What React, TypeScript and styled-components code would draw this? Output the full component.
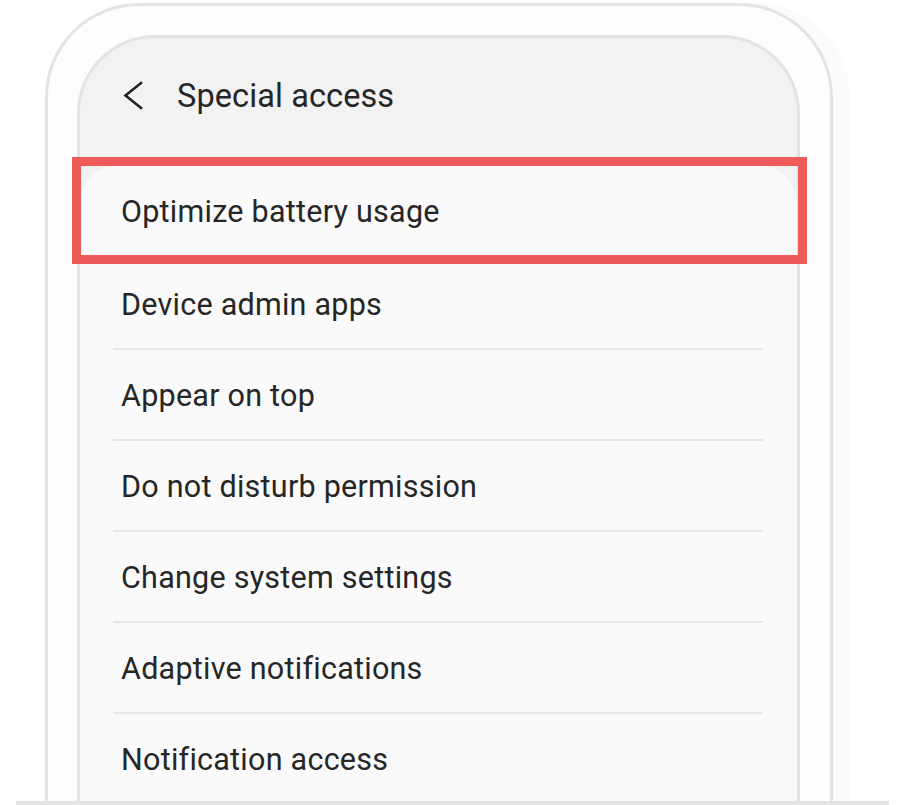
import React from 'react';
import styled, { createGlobalStyle } from 'styled-components';

const GlobalStyle = createGlobalStyle`
    html, body {
        margin: 0;
        padding: 0;
        background: #ffffff;
        overflow: hidden;
    }
    * {
        box-sizing: border-box;
    }
`;

const items = [
    'Optimize battery usage',
    'Device admin apps',
    'Appear on top',
    'Do not disturb permission',
    'Change system settings',
    'Adaptive notifications',
    'Notification access',
];

const App = () => {
    return (
        <Page>
            <GlobalStyle />
            <PhoneFrame>
                <Screen>
                    <Header>
                        <BackButton>
                            <svg width="20" height="30" viewBox="0 0 20 30" fill="none" xmlns="http://www.w3.org/2000/svg">
                                <path d="M18 2L2.5 14.5L18 27" stroke="#222222" strokeWidth="2.6" strokeLinecap="square" strokeLinejoin="miter" />
                            </svg>
                        </BackButton>
                        <Title>Special access</Title>
                    </Header>
                    <Card>
                        {items.map((label, i) => (
                            <Row key={label} first={i === 0}>
                                {label}
                            </Row>
                        ))}
                    </Card>
                </Screen>
            </PhoneFrame>
            <Highlight />
            <BaseLine />
        </Page>
    );
};

const Page = styled.div`
    position: relative;
    width: 906px;
    height: 805px;
    overflow: hidden;
    padding: 3px 0 0 45px;
    font-family: Roboto, "Noto Sans", sans-serif;
`;

const PhoneFrame = styled.div`
    width: 788px;
    height: 830px;
    border: 3px solid #e3e3e3;
    border-bottom: none;
    border-radius: 94px 94px 0 0;
    background: #fdfdfd;
    padding: 29px 30px 0 29px;
    box-shadow: 17px 0 0 0 #fbfbfb;
`;

const Screen = styled.div`
    height: 100%;
    border: 3px solid #e3e3e3;
    border-bottom: none;
    border-radius: 78px 78px 0 0;
    background: #f2f2f2;
    display: flex;
    flex-direction: column;
    overflow: hidden;
`;

const Header = styled.div`
    height: 128px;
    flex-shrink: 0;
    display: flex;
    align-items: center;
    padding: 0 0 12px 43px;
`;

const BackButton = styled.div`
    width: 20px;
    height: 30px;
    display: flex;
    align-items: center;
`;

const Title = styled.div`
    margin-left: 34px;
    font-size: 32.5px;
    color: #262626;
    letter-spacing: 0.1px;
`;

const Card = styled.div`
    flex: 1;
    background: #fafafa;
    border-radius: 37px 37px 0 0;
    padding: 0 34px 0 33px;
`;

const Row = styled.div<{ first?: boolean }>`
    height: 91px;
    display: flex;
    align-items: center;
    padding: ${props => props.first ? '0' : '1px'} 0 0 8px;
    border-top: ${props => props.first ? 'none' : '2px solid #e6e6e6'};
    font-size: 30.5px;
    color: #262626;
    letter-spacing: 0.25px;
`;

const Highlight = styled.div`
    position: absolute;
    left: 72px;
    top: 157px;
    width: 735px;
    height: 107px;
    border: 9px solid #ef5b5b;
`;

const BaseLine = styled.div`
    position: absolute;
    left: 16px;
    top: 801px;
    width: 873px;
    height: 4px;
    background: #e3e3e3;
`;

export default App;
